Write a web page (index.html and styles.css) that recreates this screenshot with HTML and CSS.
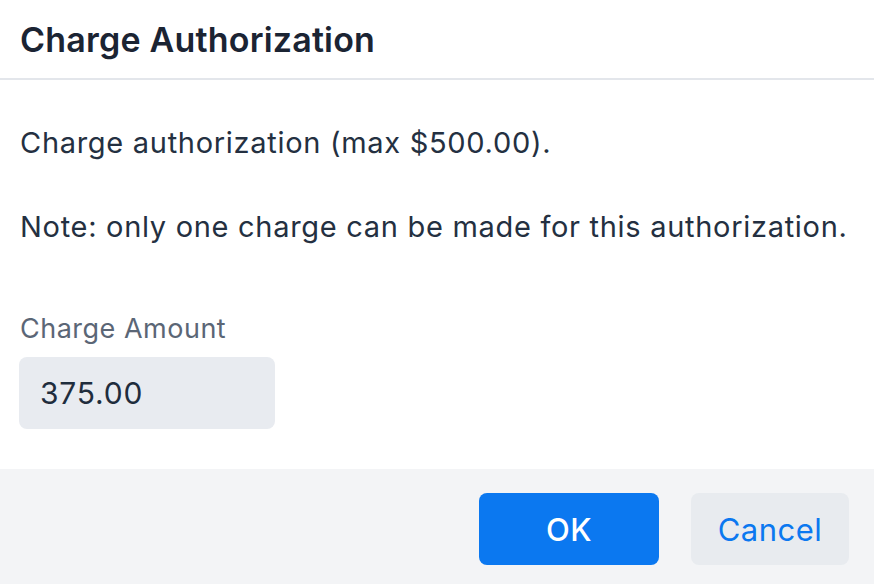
FILE: index.html
```html
<!DOCTYPE html>
<html lang="en">
  <head>
    <meta charset="UTF-8" />
    <meta name="viewport" content="width=device-width, initial-scale=1.0" />
    <title>Charge Authorization</title>
    <link rel="stylesheet" href="styles.css">
  </head>
  <body>
    <div class="dialog">
      <div class="dialog-head">
        <h1 class="title">Charge Authorization</h1>
      </div>
      <div class="dialog-body">
        <p class="msg">Charge authorization (max $500.00).</p>
        <p class="msg">Note: only one charge can be made for this authorization.</p>
        <label class="field-label" for="amount">Charge Amount</label>
        <input type="text" class="field" id="amount" value="375.00" />
      </div>
      <div class="dialog-foot">
        <button class="btn btn-ok">OK</button>
        <button class="btn btn-cancel">Cancel</button>
      </div>
    </div>
  </body>
</html>
```

FILE: styles.css
```css
body {
  margin: 0;
  background-color: #ffffff;
  font-family: Inter, "Noto Sans", sans-serif;
}
.dialog {
  width: 874px;
}
.dialog-head {
  height: 78px;
  padding: 0 20px;
  display: flex;
  align-items: center;
  border-bottom: 2px solid #e3e6eb;
}
.title {
  margin: 0;
  font-size: 34px;
  font-weight: 600;
  letter-spacing: 0.2px;
  color: #1b2433;
}
.dialog-body {
  padding: 42px 20px 40px;
}
.msg {
  margin: 0 0 42px;
  font-size: 29px;
  line-height: 42px;
  letter-spacing: 0.7px;
  color: #243041;
}
.field-label {
  display: block;
  margin-top: 63px;
  font-size: 27px;
  line-height: 36px;
  letter-spacing: 0.5px;
  color: #5b6676;
}
.field {
  display: block;
  box-sizing: border-box;
  width: 256px;
  height: 72px;
  margin: 10px 0 0 -1px;
  padding: 0 21px;
  border: none;
  border-radius: 8px;
  background-color: #e8ebf0;
  font-family: inherit;
  font-size: 30px;
  letter-spacing: 0.8px;
  color: #1f2d3d;
  outline: none;
}
.dialog-foot {
  display: flex;
  justify-content: flex-end;
  gap: 32px;
  padding: 24px 25px 24px;
  background-color: #f3f4f6;
}
.btn {
  height: 72px;
  border: none;
  border-radius: 8px;
  font-family: inherit;
  font-size: 31px;
  letter-spacing: 0.5px;
  cursor: pointer;
}
.btn-ok {
  width: 180px;
  background-color: #0b78f0;
  color: #ffffff;
  font-weight: 500;
}
.btn-cancel {
  width: 158px;
  background-color: #e8ebef;
  color: #0b78f0;
  font-weight: 400;
}
```
